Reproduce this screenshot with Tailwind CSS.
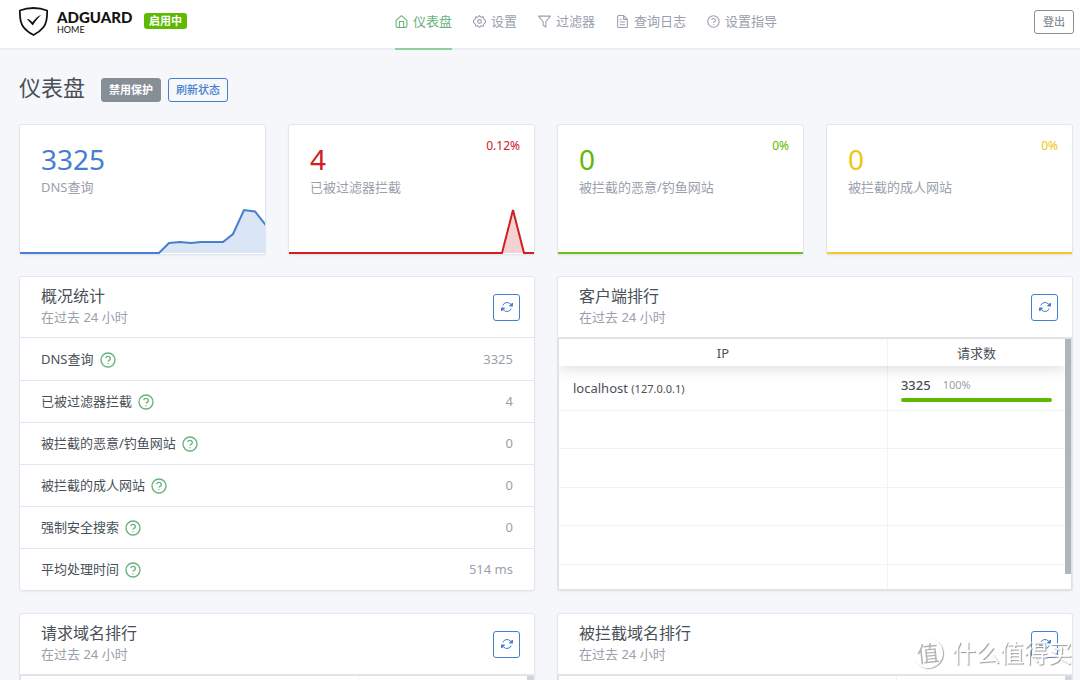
<!DOCTYPE html>
<html lang="zh-CN">
<head>
<meta charset="utf-8">
<meta name="viewport" content="width=device-width, initial-scale=1">
<title>AdGuard Home</title>
<script src="https://cdn.jsdelivr.net/npm/@tailwindcss/browser@4"></script>
</head>
<body class="h-screen overflow-hidden bg-[#f5f7fb] font-['Noto_Sans','Noto_Sans_CJK_SC',sans-serif] text-[13px] leading-5 text-[#495057]">

<svg class="hidden" aria-hidden="true">
  <symbol id="help" viewBox="0 0 24 24"><circle cx="12" cy="12" r="10.500"/><path d="M8.600 9.200a3.500 3.500 0 0 1 6.900 0.800c0 2.300-3.500 2.600-3.500 4.400M12 17v1.500"/></symbol>
  <symbol id="refresh" viewBox="0 0 24 24"><path d="M23 4v6h-6zM1 20v-6h6z" fill="currentColor"/><path d="M3.510 9a9 9 0 0 1 14.850-3.360L23 10M1 14l4.640 4.360A9 9 0 0 0 20.490 15"/></symbol>
</svg>

<header class="flex h-[50px] items-start border-b-2 border-[#ebeef3] bg-white pr-[6px] pl-[18px]">
  <a href="#" class="mt-[6px] flex items-center gap-2 text-[#131313]" aria-label="AdGuard Home">
    <svg class="h-[30px] w-[31px]" viewBox="0 0 31 30" fill="none" stroke="currentColor" stroke-width="1.800" stroke-linejoin="round">
      <path d="M15.500 2C10.500 2 6 2.900 1.900 4.500C1.700 10.500 1.600 16 5.400 21C8.300 24.800 12 27.200 15.500 29C19 27.200 22.700 24.800 25.600 21C29.400 16 29.300 10.500 29.100 4.500C25 2.900 20.500 2 15.500 2Z"/>
      <path d="M9 13.200C10.300 12.700 11.500 13.400 14.400 16.300C17.500 12.400 19.800 10.300 23.200 8.800C20.500 11.800 17.500 15 14.800 19.400C12.800 17.300 11 15.200 9 13.200Z" fill="currentColor" stroke="none"/>
    </svg>
    <span class="flex w-[78px] flex-col pt-[2px] font-['Lato',sans-serif]">
      <span class="text-[15px] leading-4 font-black">ADGUARD</span>
      <span class="text-[9px] leading-[10px]">HOME</span>
    </span>
  </a>
  <span class="mt-[13px] ml-[9px] rounded-[3px] bg-[#5eba00] px-[5px] text-[11px] leading-4 font-bold text-white">启用中</span>
  <nav class="ml-[208px] flex h-[50px] gap-[21px] text-[#9aa0ac]">
    <a href="#" class="flex items-center gap-[5px] border-b-2 border-[#8fd19e] pb-[6px] text-[#67b279]">
      <svg class="size-[13px]" viewBox="0 0 24 24" fill="none" stroke="currentColor" stroke-width="2" stroke-linejoin="round"><path d="M2 10L12 1l10 9v10a3 3 0 0 1-3 3H5a3 3 0 0 1-3-3z"/><path d="M8 22V12h8v10"/></svg>仪表盘</a>
    <a href="#" class="flex items-center gap-[5px] pb-2">
      <svg class="size-[13px]" viewBox="0 0 24 24" fill="none" stroke="currentColor" stroke-width="2" stroke-linejoin="round"><circle cx="12" cy="12" r="3.500"/><path d="M12 1l3 3 4-.5 1 4 3 2.500v4l-3 2.500-1 4-4-.5-3 3-3-3-4 .5-1-4L1 14v-4l3-2.500 1-4 4 .5z"/></svg>设置</a>
    <a href="#" class="flex items-center gap-[5px] pb-2">
      <svg class="size-[13px]" viewBox="0 0 24 24" fill="none" stroke="currentColor" stroke-width="2" stroke-linejoin="round"><path d="M23 2H1l8.500 10.500V19l5 3v-9.500z"/></svg>过滤器</a>
    <a href="#" class="flex items-center gap-[5px] pb-2">
      <svg class="size-[13px]" viewBox="0 0 24 24" fill="none" stroke="currentColor" stroke-width="2" stroke-linejoin="round"><path d="M14 1H5a2 2 0 0 0-2 2v18a2 2 0 0 0 2 2h14a2 2 0 0 0 2-2V8zM14 1v7h7M17 13H7M17 18H7M10 8H7"/></svg>查询日志</a>
    <a href="#" class="flex items-center gap-[5px] pb-2">
      <svg class="size-[13px]" fill="none" stroke="currentColor" stroke-width="2"><use href="#help"/></svg>设置指导</a>
  </nav>
  <a href="#" class="mt-[10px] ml-auto rounded-[3px] border border-[#868e96] px-2 text-[11px] leading-[22px] font-medium text-[#868e96]">登出</a>
</header>

<main class="pr-[7px] pl-[19px]">
  <div class="flex h-[74px] items-center">
    <h1 class="text-[22px] leading-7">仪表盘</h1>
    <button class="mt-[6px] ml-4 h-6 rounded-[3px] border border-[#868e96] bg-[#868e96] px-[7px] text-[11px] leading-5 font-bold text-white">禁用保护</button>
    <button class="mt-[6px] ml-[7px] h-6 rounded-[3px] border border-[#467fcf] px-[7px] text-[11px] leading-5 font-medium text-[#467fcf]">刷新状态</button>
  </div>

  <section class="grid grid-cols-4 gap-[22px]">
    <article class="flex h-[131px] flex-col rounded-[3px] border border-[#e3e6ec] bg-white shadow-xs">
      <div class="relative px-[21px] pt-4">
        <p class="text-[28px] leading-9 text-[#467fcf]">3325</p>
        <p class="text-[#9aa0ac]">DNS查询</p>
      </div>
      <svg class="mt-auto h-[50px] w-full" viewBox="0 0 245 50" preserveAspectRatio="none" fill="none" stroke="#467fcf" stroke-width="2">
        <path d="M139 49L149 39L160 38L171 39L181 38H203L213 30L224 6L235 7.500L246 21.500V49Z" fill="#dae5f5" stroke="none"/>
        <path d="M0 49H139L149 39L160 38L171 39L181 38H203L213 30L224 6L235 7.500L246 21.500" vector-effect="non-scaling-stroke"/>
      </svg>
    </article>
    <article class="flex h-[131px] flex-col rounded-[3px] border border-[#e3e6ec] bg-white shadow-xs">
      <div class="relative px-[21px] pt-4">
        <p class="text-[28px] leading-9 text-[#cd201f]">4</p>
        <p class="text-[#9aa0ac]">已被过滤器拦截</p>
        <p class="absolute top-[11px] right-[14px] text-xs leading-5 text-[#cd201f]">0.12%</p>
      </div>
      <svg class="mt-auto h-[50px] w-full" viewBox="0 0 245 50" preserveAspectRatio="none" fill="none" stroke="#cd201f" stroke-width="2">
        <path d="M213 49L224 6L235 49Z" fill="#f5d2d2" stroke="none"/>
        <path d="M0 49H213L224 6L235 49H246" vector-effect="non-scaling-stroke"/>
      </svg>
    </article>
    <article class="flex h-[131px] flex-col rounded-[3px] border border-[#e3e6ec] bg-white shadow-xs">
      <div class="relative px-[21px] pt-4">
        <p class="text-[28px] leading-9 text-[#5eba00]">0</p>
        <p class="text-[#9aa0ac]">被拦截的恶意/钓鱼网站</p>
        <p class="absolute top-[11px] right-[14px] text-xs leading-5 text-[#5eba00]">0%</p>
      </div>
      <div class="mt-auto h-[2px] bg-[#6ec01a]"></div>
    </article>
    <article class="flex h-[131px] flex-col rounded-[3px] border border-[#e3e6ec] bg-white shadow-xs">
      <div class="relative px-[21px] pt-4">
        <p class="text-[28px] leading-9 text-[#f1c40f]">0</p>
        <p class="text-[#9aa0ac]">被拦截的成人网站</p>
        <p class="absolute top-[11px] right-[14px] text-xs leading-5 text-[#f1c40f]">0%</p>
      </div>
      <div class="mt-auto h-[2px] bg-[#f2ca27]"></div>
    </article>
  </section>

  <section class="mt-[21px] grid grid-cols-2 gap-[22px]">
    <article class="rounded-[3px] border border-[#e3e6ec] bg-white shadow-xs">
      <div class="flex h-[61px] items-center justify-between border-b border-[#e3e6ec] pr-[14px] pl-[21px]">
        <div class="pb-[2px]">
          <h2 class="text-base leading-[22px]">概况统计</h2>
          <p class="text-[#9aa0ac]">在过去 24 小时</p>
        </div>
        <button class="flex size-[27px] items-center justify-center rounded-[3px] border border-[#467fcf] text-[#467fcf]" aria-label="刷新"><svg class="size-3" fill="none" stroke="currentColor" stroke-width="2"><use href="#refresh"/></svg></button>
      </div>
      <table class="w-full">
        <tbody>
          <tr class="h-[42px] border-b border-[#e3e6ec]"><th class="pl-[21px] text-left font-normal"><span class="flex items-center gap-[6px]">DNS查询<svg class="mt-[2px] size-4" fill="none" stroke="#67b279" stroke-width="2"><use href="#help"/></svg></span></th><td class="pr-[21px] text-right text-[#9aa0ac]">3325</td></tr>
          <tr class="h-[42px] border-b border-[#e3e6ec]"><th class="pl-[21px] text-left font-normal"><span class="flex items-center gap-[6px]">已被过滤器拦截<svg class="mt-[2px] size-4" fill="none" stroke="#67b279" stroke-width="2"><use href="#help"/></svg></span></th><td class="pr-[21px] text-right text-[#9aa0ac]">4</td></tr>
          <tr class="h-[42px] border-b border-[#e3e6ec]"><th class="pl-[21px] text-left font-normal"><span class="flex items-center gap-[6px]">被拦截的恶意/钓鱼网站<svg class="mt-[2px] size-4" fill="none" stroke="#67b279" stroke-width="2"><use href="#help"/></svg></span></th><td class="pr-[21px] text-right text-[#9aa0ac]">0</td></tr>
          <tr class="h-[42px] border-b border-[#e3e6ec]"><th class="pl-[21px] text-left font-normal"><span class="flex items-center gap-[6px]">被拦截的成人网站<svg class="mt-[2px] size-4" fill="none" stroke="#67b279" stroke-width="2"><use href="#help"/></svg></span></th><td class="pr-[21px] text-right text-[#9aa0ac]">0</td></tr>
          <tr class="h-[42px] border-b border-[#e3e6ec]"><th class="pl-[21px] text-left font-normal"><span class="flex items-center gap-[6px]">强制安全搜索<svg class="mt-[2px] size-4" fill="none" stroke="#67b279" stroke-width="2"><use href="#help"/></svg></span></th><td class="pr-[21px] text-right text-[#9aa0ac]">0</td></tr>
          <tr class="h-[42px]"><th class="pl-[21px] text-left font-normal"><span class="flex items-center gap-[6px]">平均处理时间<svg class="mt-[2px] size-4" fill="none" stroke="#67b279" stroke-width="2"><use href="#help"/></svg></span></th><td class="pr-[21px] text-right text-[#9aa0ac]">514 ms</td></tr>
        </tbody>
      </table>
    </article>

    <article class="flex flex-col rounded-[3px] border border-[#e3e6ec] bg-white shadow-xs">
      <div class="flex h-[61px] items-center justify-between border-b border-[#e3e6ec] pr-[14px] pl-[21px]">
        <div class="pb-[2px]">
          <h2 class="text-base leading-[22px]">客户端排行</h2>
          <p class="text-[#9aa0ac]">在过去 24 小时</p>
        </div>
        <button class="flex size-[27px] items-center justify-center rounded-[3px] border border-[#467fcf] text-[#467fcf]" aria-label="刷新"><svg class="size-3" fill="none" stroke="currentColor" stroke-width="2"><use href="#refresh"/></svg></button>
      </div>
      <div class="flex h-[252px] overflow-hidden border border-[#e0e0e3]">
        <table class="h-max flex-1 table-fixed border-separate border-spacing-0">
          <colgroup><col class="w-[65%]"><col class="w-[35%]"></colgroup>
          <thead class="relative shadow-[0_2px_15px_0_rgba(0,0,0,0.15)]">
            <tr class="h-[27px]"><th class="border-r border-[#f2f2f2] bg-white font-normal">IP</th><th class="bg-white font-normal">请求数</th></tr>
          </thead>
          <tbody>
            <tr class="h-[45px]">
              <td class="border-r border-b border-[#f2f2f2] pl-[14px]">localhost <span class="text-[11px]">(127.0.0.1)</span></td>
              <td class="border-b border-[#f2f2f2] px-[13px]">
                <div class="flex items-center gap-3 leading-5"><span class="font-medium">3325</span><span class="text-[11px] text-[#9aa0ac]">100%</span></div>
                <div class="mt-[3px] h-1 rounded-full bg-[#5eba00]" role="progressbar" aria-label="请求占比" aria-valuenow="100"></div>
              </td>
            </tr>
            <tr class="h-[38px]"><td class="border-r border-b border-[#f2f2f2]"></td><td class="border-b border-[#f2f2f2]"></td></tr>
            <tr class="h-[39px]"><td class="border-r border-b border-[#f2f2f2]"></td><td class="border-b border-[#f2f2f2]"></td></tr>
            <tr class="h-[38px]"><td class="border-r border-b border-[#f2f2f2]"></td><td class="border-b border-[#f2f2f2]"></td></tr>
            <tr class="h-[39px]"><td class="border-r border-b border-[#f2f2f2]"></td><td class="border-b border-[#f2f2f2]"></td></tr>
            <tr class="h-[38px]"><td class="border-r border-b border-[#f2f2f2]"></td><td class="border-b border-[#f2f2f2]"></td></tr>
          </tbody>
        </table>
        <div class="relative h-[235px] w-[6px] bg-[#adb5bd]"></div>
      </div>
    </article>
  </section>

  <section class="mt-[22px] grid grid-cols-2 gap-[22px]">
    <article class="rounded-[3px] border border-[#e3e6ec] bg-white shadow-xs">
      <div class="flex h-[61px] items-center justify-between border-b border-[#e3e6ec] pr-[14px] pl-[21px]">
        <div class="pb-[2px]">
          <h2 class="text-base leading-[22px]">请求域名排行</h2>
          <p class="text-[#9aa0ac]">在过去 24 小时</p>
        </div>
        <button class="flex size-[27px] items-center justify-center rounded-[3px] border border-[#467fcf] text-[#467fcf]" aria-label="刷新"><svg class="size-3" fill="none" stroke="currentColor" stroke-width="2"><use href="#refresh"/></svg></button>
      </div>
      <div class="flex h-[252px] border border-[#e0e0e3]">
        <div class="w-[66%] border-r border-[#f2f2f2]"></div>
        <div class="flex-1"></div>
        <div class="w-[6px] bg-[#ced4da]"></div>
      </div>
    </article>
    <article class="rounded-[3px] border border-[#e3e6ec] bg-white shadow-xs">
      <div class="flex h-[61px] items-center justify-between border-b border-[#e3e6ec] pr-[14px] pl-[21px]">
        <div class="pb-[2px]">
          <h2 class="text-base leading-[22px]">被拦截域名排行</h2>
          <p class="text-[#9aa0ac]">在过去 24 小时</p>
        </div>
        <button class="flex size-[27px] items-center justify-center rounded-[3px] border border-[#467fcf] text-[#467fcf]" aria-label="刷新"><svg class="size-3" fill="none" stroke="currentColor" stroke-width="2"><use href="#refresh"/></svg></button>
      </div>
      <div class="flex h-[252px] border border-[#e0e0e3]">
        <div class="w-[66%] border-r border-[#f2f2f2]"></div>
        <div class="flex-1"></div>
        <div class="w-[6px] bg-[#ced4da]"></div>
      </div>
    </article>
  </section>
</main>

<div class="pointer-events-none fixed right-[8px] bottom-[11px] flex items-center gap-[9px] text-white">
  <span class="flex size-[30px] -rotate-6 items-center justify-center rounded-full bg-white text-[22px] text-[#b5b5b5] shadow-[1px_1px_1px_#aaa]">值</span>
  <span class="text-2xl [text-shadow:1px_1px_1px_#999]">什么值得买</span>
</div>
</body>
</html>
